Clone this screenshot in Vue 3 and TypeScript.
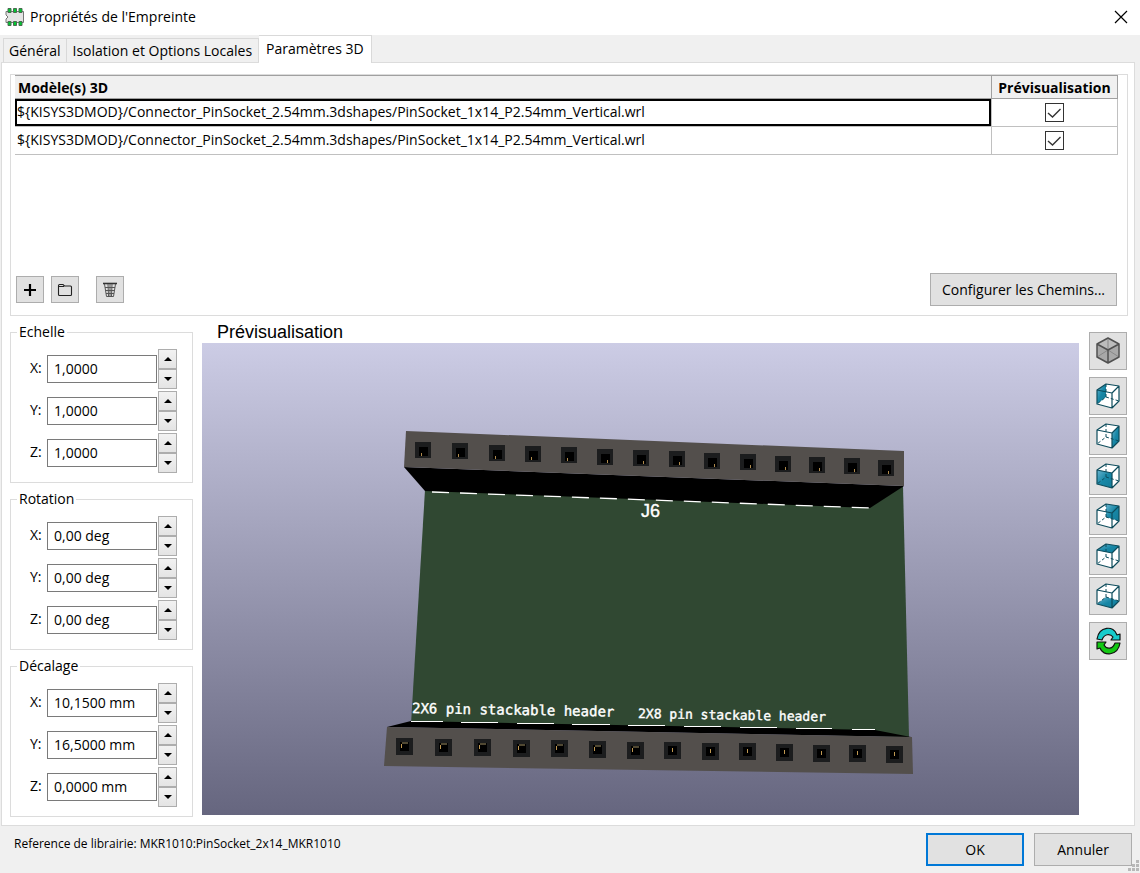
<script setup lang="ts">
import { reactive, ref } from 'vue'

interface Model { path: string; preview: boolean }
interface Axis { name: string; value: string }
interface AxisGroup { title: string; axes: Axis[] }
interface View { title: string; face: string }

const tabs = ['Général', 'Isolation et Options Locales', 'Paramètres 3D']
const activeTab = ref(2)
const selectedRow = ref(0)

const socket = '${KISYS3DMOD}/Connector_PinSocket_2.54mm.3dshapes/PinSocket_1x14_P2.54mm_Vertical.wrl'
const models = reactive<Model[]>([
  { path: socket, preview: true },
  { path: socket, preview: true },
])

const axes = (x: string, y: string, z: string): Axis[] => [
  { name: 'X:', value: x },
  { name: 'Y:', value: y },
  { name: 'Z:', value: z },
]
const groups = reactive<AxisGroup[]>([
  { title: 'Echelle', axes: axes('1,0000', '1,0000', '1,0000') },
  { title: 'Rotation', axes: axes('0,00 deg', '0,00 deg', '0,00 deg') },
  { title: 'Décalage', axes: axes('10,1500 mm', '16,5000 mm', '0,0000 mm') },
])

function step(axis: Axis, sign: number) {
  const [num, unit] = axis.value.split(' ')
  const decimals = (num.split(',')[1] ?? '').length
  const next = (parseFloat(num.replace(',', '.')) + sign).toFixed(decimals).replace('.', ',')
  axis.value = unit ? `${next} ${unit}` : next
}

const views: View[] = [
  { title: 'Vue de gauche', face: '8,13 17,7 17,20 8,27' },
  { title: 'Vue de droite', face: '23,16 30,9 30,24 23,31' },
  { title: 'Vue de face', face: '8,13 23,16 23,31 8,27' },
  { title: 'Vue arrière', face: '17,7 30,9 30,24 17,20' },
  { title: 'Vue de dessus', face: '8,13 17,7 30,9 23,16' },
  { title: 'Vue de dessous', face: '8,27 17,20 30,24 23,31' },
]

const topPins = [
  [423, 450], [460, 451], [497, 453], [533, 454], [569, 455], [605, 457], [641, 458],
  [677, 459], [712, 461], [748, 462], [783, 464], [817, 465], [852, 466], [886, 468],
]
const bottomPins = [
  [404, 747], [443, 748], [482, 748], [521, 749], [559, 749], [597, 750], [635, 751],
  [672, 751], [710, 752], [747, 752], [784, 753], [821, 754], [857, 754], [894, 755],
]
</script>

<template>
  <div class="dialog">
    <header class="titlebar">
      <svg class="logo" width="20" height="20" viewBox="0 0 20 20" aria-hidden="true">
        <path d="M1 4.500H18.500V15.500H1V12L3 10L1 8Z" fill="#e4e4e4" stroke="#777" />
        <g fill="#00c832" stroke="#4a6a50">
          <path d="M3 1.500h3v4h-3zM8.500 1.500h3v4h-3zM14 1.500h3v4h-3zM3 14.500h3v4h-3zM8.500 14.500h3v4h-3zM14 14.500h3v4h-3z" />
        </g>
      </svg>
      <h1>Propriétés de l'Empreinte</h1>
      <button class="close" type="button" aria-label="Fermer">
        <svg width="14" height="14" viewBox="0 0 14 14"><path d="M1 1L13 13M13 1L1 13" stroke="#000" stroke-width="1.200" /></svg>
      </button>
    </header>

    <div class="tabs" role="tablist">
      <button
        v-for="(tab, i) in tabs" :key="tab" type="button" role="tab"
        :aria-selected="i === activeTab" :class="{ active: i === activeTab }" @click="activeTab = i"
      >{{ tab }}</button>
    </div>

    <main class="panel">
      <section class="models">
        <div class="table-area">
          <table>
            <thead>
              <tr><th class="path">Modèle(s) 3D</th><th class="show">Prévisualisation</th></tr>
            </thead>
            <tbody>
              <tr v-for="(m, i) in models" :key="i">
                <td class="path" :class="{ current: i === selectedRow }" @click="selectedRow = i">{{ m.path }}</td>
                <td class="show">
                  <label class="check">
                    <input v-model="m.preview" type="checkbox" aria-label="Prévisualisation">
                    <svg v-if="m.preview" width="19" height="19" viewBox="0 0 19 19"><path d="M3 10L7.500 14L15.500 6" fill="none" stroke="#333" stroke-width="1.400" /></svg>
                  </label>
                </td>
              </tr>
            </tbody>
          </table>
        </div>
        <div class="actions">
          <button class="btn icon" type="button" aria-label="Ajouter">
            <svg width="20" height="20" viewBox="0 0 20 20"><path d="M10 4V16M4 10H16" stroke="#000" stroke-width="2.200" /></svg>
          </button>
          <button class="btn icon" type="button" aria-label="Parcourir">
            <svg width="20" height="20" viewBox="0 0 20 20"><path d="M3.500 14.500V5.500Q3.500 4.500 4.500 4.500H8L9.500 6H15.500Q16.500 6 16.500 7V14.500Q16.500 15.500 15.500 15.500H4.500Q3.500 15.500 3.500 14.500ZM3.500 6.500H9" fill="none" stroke="#222" stroke-width="1.100" /></svg>
          </button>
          <button class="btn icon trash" type="button" aria-label="Supprimer">
            <svg width="20" height="20" viewBox="0 0 20 20"><path d="M3 3.500H17" stroke="#333" stroke-width="1.600" /><path d="M4.500 4L6.500 16.500H13.500L15.500 4M8 4L8.500 16M12 4L11.500 16M10 4V16M5 7.500H15M5.500 10.500H14.500M6 13.500H14" fill="none" stroke="#555" stroke-width="1" /></svg>
          </button>
          <button class="btn configure" type="button">Configurer les Chemins...</button>
        </div>
      </section>

      <div class="workspace">
        <div class="groups">
          <fieldset v-for="(g, gi) in groups" :key="g.title">
            <legend>{{ g.title }}</legend>
            <div v-for="(a, ai) in g.axes" :key="a.name" class="axis">
              <label :for="`axis-${gi}-${ai}`">{{ a.name }}</label>
              <input :id="`axis-${gi}-${ai}`" v-model="a.value" type="text">
              <div class="spin">
                <button type="button" aria-label="Augmenter" @click="step(a, 1)">
                  <svg width="8" height="4" viewBox="0 0 8 4"><path d="M0 4L4 0L8 4Z" /></svg>
                </button>
                <button type="button" aria-label="Diminuer" @click="step(a, -1)">
                  <svg width="8" height="4" viewBox="0 0 8 4"><path d="M0 0L4 4L8 0Z" /></svg>
                </button>
              </div>
            </div>
          </fieldset>
        </div>

        <section class="preview">
          <h2>Prévisualisation</h2>
          <div class="scene">
            <svg viewBox="0 0 877 472" role="img" aria-label="Aperçu 3D">
              <g transform="translate(-202 -343)">
                <path d="M425 490L903 486L909 737L411 724Z" fill="#304832" />
                <path d="M404 467L904 486L870 508L425 491Z" fill="#000" />
                <path d="M406 431L904 451L904 486L404 467Z" fill="#534f4c" />
                <path d="M387 727L411 721L875 730L911 737Z" fill="#000" />
                <path d="M387 727L912 737L913 774L384 766Z" fill="#534f4c" />
                <path d="M432 492L870 508" stroke="#fff" stroke-width="1.300" stroke-dasharray="17 11" />
                <path d="M411 721.500L443 721.500M461 722.500L498 722.500M517 723.500L554 723.500M572 724.500L610 724.500M628 725.500L665 725.500M684 726.500L721 726.500M740 727.500L777 727.500M796 728.500L832 728.500M852 729.500L875 729.500" stroke="#fff" stroke-width="1.200" />
                <g v-for="([x, y], i) in topPins" :key="`t${i}`">
                  <rect :x="x - 8" :y="y - 8" width="16" height="16" fill="#1c1d1e" />
                  <rect :x="x - 4" :y="y - 3" width="9" height="9" fill="#000" />
                  <rect :x="i < 5 ? x - 2 : x + 2" :y="y + 3" width="1" height="3" fill="#b08b4c" />
                </g>
                <g v-for="([x, y], i) in bottomPins" :key="`b${i}`">
                  <rect :x="x - 8" :y="y - 9" width="17" height="17" fill="#1c1d1e" />
                  <rect :x="x - 4" :y="y - 5" width="9" height="9" fill="#000" />
                  <rect v-if="i < 7" :x="x - 2" :y="y - 5" width="6" height="2" fill="#504832" />
                  <rect :x="i < 7 ? x - 3 : x" :y="y - 3" width="1" height="4" fill="#c09850" />
                </g>
                <g class="silk">
                  <text class="ref" x="641" y="517">J6</text>
                  <text class="long" x="412" y="713" transform="rotate(1 412 713)">2X6 pin stackable header</text>
                  <text class="short" x="638" y="718" transform="rotate(1 638 718)">2X8 pin stackable header</text>
                </g>
              </g>
            </svg>
          </div>
        </section>

        <div class="viewbar">
          <button class="btn view iso" type="button" aria-label="Projection orthographique">
            <svg width="36" height="36" viewBox="1 1 36 36">
              <path d="M19 6L30 12V25L19 31L8 25V12Z" fill="#a8a8a8" />
              <path d="M19 6L30 12L19 18L8 12Z" fill="#bcbcbc" />
              <path d="M19 6V18L8 25M19 18L30 25" fill="none" stroke="#888" stroke-width="1" />
              <path d="M19 6L30 12V25L19 31L8 25V12ZM8 12L19 18L30 12M19 18V31" fill="none" stroke="#505050" stroke-width="1.500" stroke-linejoin="round" />
            </svg>
          </button>
          <button v-for="v in views" :key="v.title" class="btn view" type="button" :aria-label="v.title">
            <svg width="36" height="36" viewBox="1 1 36 36">
              <defs>
                <linearGradient id="face" x1="0" y1="0" x2="1" y2="1">
                  <stop offset="0" stop-color="#6ab4cf" /><stop offset="0.500" stop-color="#1787a6" /><stop offset="1" stop-color="#137c99" />
                </linearGradient>
              </defs>
              <path d="M8 13L17 7L30 9V24L23 31L8 27Z" fill="#fff" />
              <polygon :points="v.face" fill="url(#face)" />
              <path d="M17 7V20L8 27M17 20L30 24" fill="none" stroke="#0d4c5c" stroke-width="1" stroke-dasharray="3 2" />
              <path d="M8 13L17 7L30 9V24L23 31L8 27ZM8 13L23 16L30 9M23 16V31" fill="none" stroke="#0d4c5c" stroke-width="1.200" stroke-linejoin="round" />
            </svg>
          </button>
          <button class="btn view reload" type="button" aria-label="Recharger">
            <svg width="36" height="36" viewBox="1 1 36 36" stroke="#111" stroke-width="1.200" stroke-linejoin="round">
              <path d="M8 17C10 4 25 3 28 13L31 12V18H22L24 15C21 11 15 12 13 18Z" fill="#16cccc" />
              <path d="M31 21C29 34 14 35 11 26L8 27V20H17L15 23C18 28 24 27 26 21Z" fill="#12c812" />
            </svg>
          </button>
        </div>
      </div>
    </main>

    <footer>
      <p>Reference de librairie: MKR1010:PinSocket_2x14_MKR1010</p>
      <button class="btn primary" type="button">OK</button>
      <button class="btn" type="button">Annuler</button>
      <svg class="grip" width="11" height="11" viewBox="0 0 11 11" fill="#b8b8b8" aria-hidden="true">
        <path d="M8 0h3v3h-3zM4 4h3v3h-3zM8 4h3v3h-3zM0 8h3v3h-3zM4 8h3v3h-3zM8 8h3v3h-3z" />
      </svg>
    </footer>
  </div>
</template>

<style>
body { margin: 0; }
</style>

<style scoped>
* { box-sizing: border-box; }
.dialog {
  position: relative;
  display: flex;
  flex-direction: column;
  min-height: 100vh;
  background: #f0f0f0;
  border-bottom: 1px solid #111;
  color: #000;
  font: 14px/18px "Open Sans", "Noto Sans", sans-serif;
}
button, input { font: inherit; color: inherit; margin: 0; }
button { padding: 0; }
svg { display: block; }
.titlebar {
  display: flex;
  align-items: center;
  gap: 5px;
  height: 35px;
  padding: 0 9px 2px 5px;
  background: #fff;
}
h1 { flex: 1; margin: 0; font-size: 14px; font-weight: 400; }
.close { display: grid; place-items: center; width: 20px; height: 20px; border: 0; background: none; }

.tabs { display: flex; align-items: flex-end; height: 27px; padding-left: 3px; }
.tabs button {
  height: 24px;
  padding: 0 5px;
  border: 1px solid #d9d9d9;
  border-bottom: 0;
  background: #f0f0f0;
  white-space: nowrap;
}
.tabs button + button { border-left: 0; padding: 0 6px; }
.tabs button.active {
  position: relative;
  height: 28px;
  margin-bottom: -1px;
  padding: 0 7px 2px;
  background: #fff;
}

.panel {
  flex: 1;
  display: flex;
  flex-direction: column;
  gap: 7px;
  margin: 0 5px 0 1px;
  padding: 11px 6px 8px 8px;
  border: 1px solid #dcdcdc;
  background: #fff;
}
.models { padding: 0 9px 9px 4px; border: 1px solid #dcdcdc; }
.table-area { min-height: 198px; }
table { width: 100%; border-spacing: 0; table-layout: fixed; }
th {
  height: 24px;
  padding: 2px 3px 0;
  border: solid #a0a0a0;
  border-width: 1px 1px 1px 0;
  background: #f0f0f0;
  text-align: left;
  line-height: 18px;
}
td { height: 28px; padding: 0 2px; border: solid #c0c0c0; border-width: 0 1px 1px 0; }
td.path { padding-bottom: 2px; white-space: nowrap; overflow: hidden; }
td.current { box-shadow: inset 0 0 0 2px #000; }
.show { width: 126px; padding-left: 0; padding-right: 0; text-align: center; }
.check { display: inline-grid; vertical-align: middle; }
.check > * { grid-area: 1 / 1; }
.check svg { pointer-events: none; }
.check input { appearance: none; width: 19px; height: 19px; border: 1px solid #333; background: #fff; }

.btn {
  display: grid;
  place-items: center;
  border: 1px solid #adadad;
  background: #e1e1e1;
}
.actions { display: flex; align-items: center; gap: 7px; padding: 0 1px; }
.icon { width: 28px; height: 27px; }
.trash { margin-left: 10px; }
.configure { height: 33px; margin-left: auto; padding: 0 11px; }

.workspace { flex: 1; display: flex; gap: 9px; padding-right: 1px; }
.groups { display: flex; flex-direction: column; gap: 7px; }
fieldset {
  display: flex;
  flex-direction: column;
  gap: 2px;
  min-width: 0;
  margin: 0;
  padding: 8px 15px 9px 18px;
  border: 1px solid #dcdcdc;
}
legend { margin-left: -12px; padding: 0 2px; }
.axis { display: grid; grid-template-columns: 18px 110px 20px; align-items: center; height: 40px; }
.axis label { padding: 0 0 2px 1px; }
.axis input { width: 110px; height: 28px; padding: 0 6px 2px; border: 1px solid #7a7a7a; background: #fff; }
.spin { display: grid; grid-template-rows: 20px 20px; padding-left: 1px; }
.spin button {
  display: grid;
  place-items: center;
  border: 1px solid #adadad;
  background: linear-gradient(#f2f2f2, #e4e4e4);
}

.preview { flex: 1; display: flex; flex-direction: column; min-width: 0; padding-bottom: 2px; }
h2 { margin: 0 15px; padding-bottom: 2px; font: 18px/18px "Liberation Sans", Arial, sans-serif; }
.scene { flex: 1; background: linear-gradient(#cccce5, #66667f); overflow: hidden; }
.scene svg { width: 100%; }
.silk { fill: #fff; stroke: #fff; stroke-width: 0.4px; font-family: "DejaVu Sans Mono", monospace; }
.ref { font: 18px "Liberation Sans", Arial, sans-serif; }
.long { font-size: 14px; }
.short { font-size: 13px; }

.viewbar { display: flex; flex-direction: column; gap: 2px; margin-left: 1px; padding-top: 9px; }
.view { width: 38px; height: 38px; }
.iso { margin-bottom: 5px; }
.reload { margin-top: 5px; }

footer { position: relative; display: flex; align-items: flex-start; gap: 10px; padding: 7px 8px 7px 14px; }
footer p { flex: 1; margin: 2px 0; font-size: 12px; line-height: 18px; }
footer .btn { width: 98px; height: 33px; }
footer .primary { border: 2px solid #0078d7; }
.grip { position: absolute; right: 1px; bottom: 2px; }
</style>
